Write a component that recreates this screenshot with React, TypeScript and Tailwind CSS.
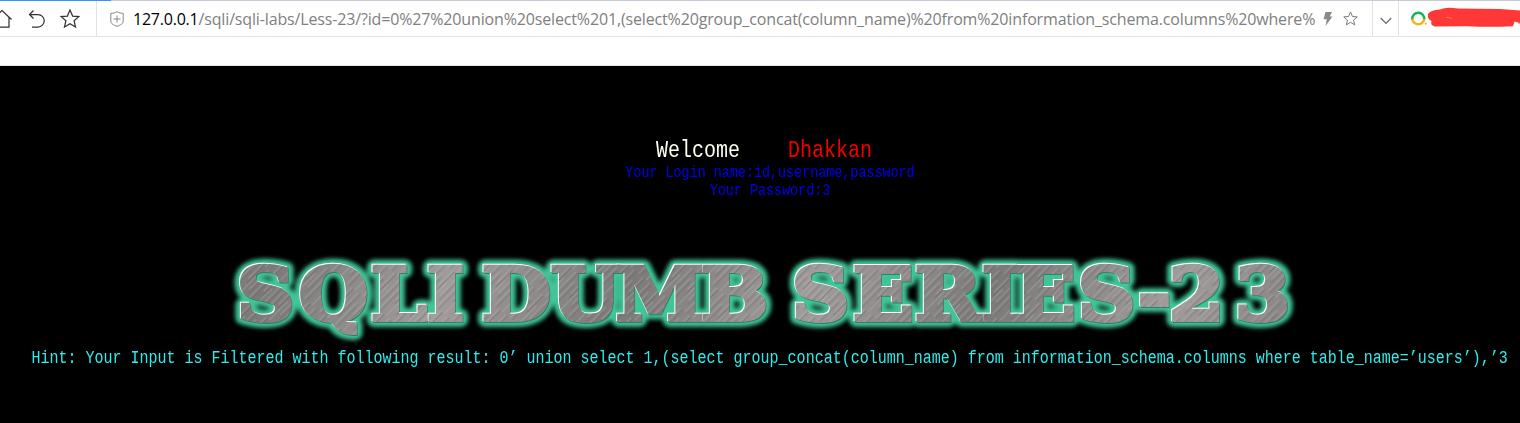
import React from "react";

const words = [
  { text: "SQLI", x: [237, 299, 371, 427] },
  { text: "DUMB", x: [482, 551, 616, 701] },
  { text: "SERIES-23", x: [792, 853, 915, 982, 1015, 1078, 1138, 1169, 1235] },
];
const SX = 1.1;

function Words() {
  return (
    <g transform={`scale(${SX} 1)`}>
      {words.map((w) => (
        <text key={w.text} x={w.x.map((v) => (v / SX).toFixed(2)).join(" ")} y="320">
          {w.text}
        </text>
      ))}
    </g>
  );
}

function Banner() {
  return (
    <svg
      viewBox="220 250 1090 96"
      className="block h-[96px] w-[1090px] [font-family:'DejaVu_Serif',serif] text-[72px] font-bold"
      aria-label="SQLI DUMB SERIES-23"
    >
      <defs>
        <linearGradient id="sheen" x1="0" x2="150" y1="0" y2="50" gradientUnits="userSpaceOnUse" spreadMethod="reflect">
          <stop offset="0" stopColor="#7c7979" />
          <stop offset="1" stopColor="#a09c9c" />
        </linearGradient>
        <pattern id="steel" width="1600" height="400" patternUnits="userSpaceOnUse">
          <rect width="1600" height="400" fill="url(#sheen)" />
          <rect width="1600" height="400" fill="url(#scratches)" />
        </pattern>
        <pattern id="scratches" width="19" height="37" patternUnits="userSpaceOnUse" patternTransform="rotate(42)">
          <path d="M1 0V26M6.500 8V37M12 0V19M16 12V37" stroke="#bbb7b7" strokeWidth=".7" opacity=".6" />
          <path d="M3.500 0V30M9 11V37M14 0V23" stroke="#5f5c5c" strokeWidth=".7" opacity=".55" />
        </pattern>
        <filter id="soft" x="-5%" y="-30%" width="110%" height="160%">
          <feGaussianBlur stdDeviation="1.9" />
        </filter>
      </defs>
      <g fill="#3fc598" stroke="#3fc598" strokeWidth="14" strokeLinejoin="round" filter="url(#soft)">
        <Words />
      </g>
      <g fill="#397b64" stroke="#397b64" strokeWidth="4" transform="translate(.7 .7)">
        <Words />
      </g>
      <g fill="#fff" stroke="#fff" strokeWidth="4" transform="translate(-.9 -.9)">
        <Words />
      </g>
      <g fill="url(#steel)" stroke="url(#steel)" strokeWidth="4">
        <Words />
      </g>
    </svg>
  );
}

function Star({ className }: { className: string }) {
  return (
    <svg viewBox="0 0 20 20" className={className} fill="none" stroke="currentColor" strokeWidth="1.3">
      <path d="M10 1.2 12.6 7.3 19 7.8 14.1 12.1 15.6 18.5 10 15.1 4.4 18.5 5.9 12.1 1 7.8 7.4 7.3Z" />
    </svg>
  );
}

function Toolbar() {
  return (
    <header className="h-[66px] border-b border-[#e4e4e8] bg-white">
      <div className="flex h-px">
        <div className="w-[111px] bg-[#2e96ff]" />
        <div className="flex-1 bg-[#c5cad6]" />
      </div>
      <div className="flex h-[36px] items-stretch border-b border-[#dfe2e8]">
        <div className="flex w-[97px] shrink-0 items-center border-r border-[#dfe2e8] text-[#333]">
          <svg viewBox="0 0 97 34" className="h-[34px] w-[97px] shrink-0" fill="none" stroke="currentColor" strokeWidth="1.25">
            <path d="M-8 17.500 2 8.500 11.500 17.500M9 15.500V25H-4" />
            <path d="M33.5 8.500 29.5 12.500 33.5 16.500M29.5 12.500H38A6 6 0 0 1 38 25H32" />
            <path d="M70 8 72.6 14.1 78.8 14.6 74.1 18.7 75.5 25 70 21.7 64.5 25 65.9 18.7 61.2 14.6 67.4 14.1Z" />
          </svg>
        </div>
        <div className="flex w-[1276px] shrink-0 items-center border-r border-[#dfe2e8] pl-[13px]">
          <svg viewBox="0 0 14 16" className="h-4 w-[14px] shrink-0" fill="none" stroke="#888">
            <path d="M7 .7C5 2 3 2.3.8 2.3V10C.8 13 4 14.3 7 15.3 10 14.3 13.2 13 13.2 10V2.3C11 2.3 9 2 7 .7ZM7 4.5V11.5M3.5 8H10.5" />
          </svg>
          <div className="ml-[9px] w-[1182px] shrink-0 whitespace-nowrap [font-family:'Open_Sans',sans-serif] text-[16px] leading-[34px] text-[#808080]">
            <span className="tracking-[-0.22px] text-black">127.0.0.1</span>
            <span className="tracking-[-0.15px]">/sqli/sqli-labs/Less-23/?id=0%27%20union%20select%201,(select%20group_concat(column_name)%20from%20information_schema.columns%20where%</span>
          </div>
          <svg viewBox="0 0 10 14" className="ml-[8px] h-[14px] w-[10px] shrink-0" fill="#8a8a8a">
            <path d="M2.5 0H9L6.7 4.5H9.5L2.5 14 3.8 7.3H.5Z" />
          </svg>
          <Star className="ml-[10px] h-[15px] w-[15px] shrink-0 text-[#777]" />
        </div>
        <div className="flex w-[26px] shrink-0 items-center justify-center border-r border-[#dfe2e8]">
          <svg viewBox="0 0 12 8" className="mt-1 h-2 w-3" fill="none" stroke="#666" strokeWidth="1.2">
            <path d="M.8 1 6 6.3 11.2 1" />
          </svg>
        </div>
        <svg viewBox="1399 1 121 35" className="h-[35px] w-[121px] shrink-0">
          <g fill="none" strokeWidth="2.5">
            <path d="M1412.3 19.5A6 6 0 1 1 1424.2 19.5" stroke="#18b556" />
            <path d="M1412.3 19A6 6 0 0 0 1424.2 19" stroke="#f6b41b" />
          </g>
          <circle cx="1425.8" cy="23.7" r="1.1" fill="#f6b41b" />
          <path d="M1428 14Q1430 10 1440 9.500Q1446 6.500 1458 8.500L1500 9L1520 10.500V23Q1516 22 1514.500 21.500L1513 26.300Q1490 27.300 1467 26.300L1435 26.500Q1430 25.500 1431.500 21Q1427 19 1428 14Z" fill="#ff3737" />
          <path d="M1446 17.500Q1449 17 1452 18.500" fill="none" stroke="#e78784" strokeWidth=".8" />
          <path d="M1518.500 24 1520 22.500" stroke="#777" />
        </svg>
      </div>
    </header>
  );
}

export default function App() {
  return (
    <div className="h-[423px] w-[1520px] overflow-hidden bg-black [font-family:'Liberation_Mono',monospace]">
      <Toolbar />
      <main className="flex flex-col">
        <div className="mt-[71px] flex h-7 scale-y-115 gap-[48px] pl-[656px] text-[20px] leading-7 whitespace-pre">
          <span className="text-[#fffff0]">Welcome</span>
          <span className="text-[#f00000]">Dhakkan</span>
        </div>
        <div className="-mt-px ml-[625px] w-[290px] text-center text-[13.4px] leading-[18px] whitespace-nowrap text-[#0000f0]">
          <div className="scale-y-118">Your Login name:id,username,password</div>
          <div className="scale-y-118">Your Password:3</div>
        </div>
        <div className="mt-[50px] ml-[220px]">
          <Banner />
        </div>
        <p className="mt-[3px] ml-[31.500px] scale-y-117 text-[15px] leading-5 whitespace-nowrap text-[#2ceeee]">
          Hint: Your Input is Filtered with following result: 0’ union select 1,(select group_concat(column_name) from information_schema.columns where table_name=’users’),’3
        </p>
      </main>
    </div>
  );
}
